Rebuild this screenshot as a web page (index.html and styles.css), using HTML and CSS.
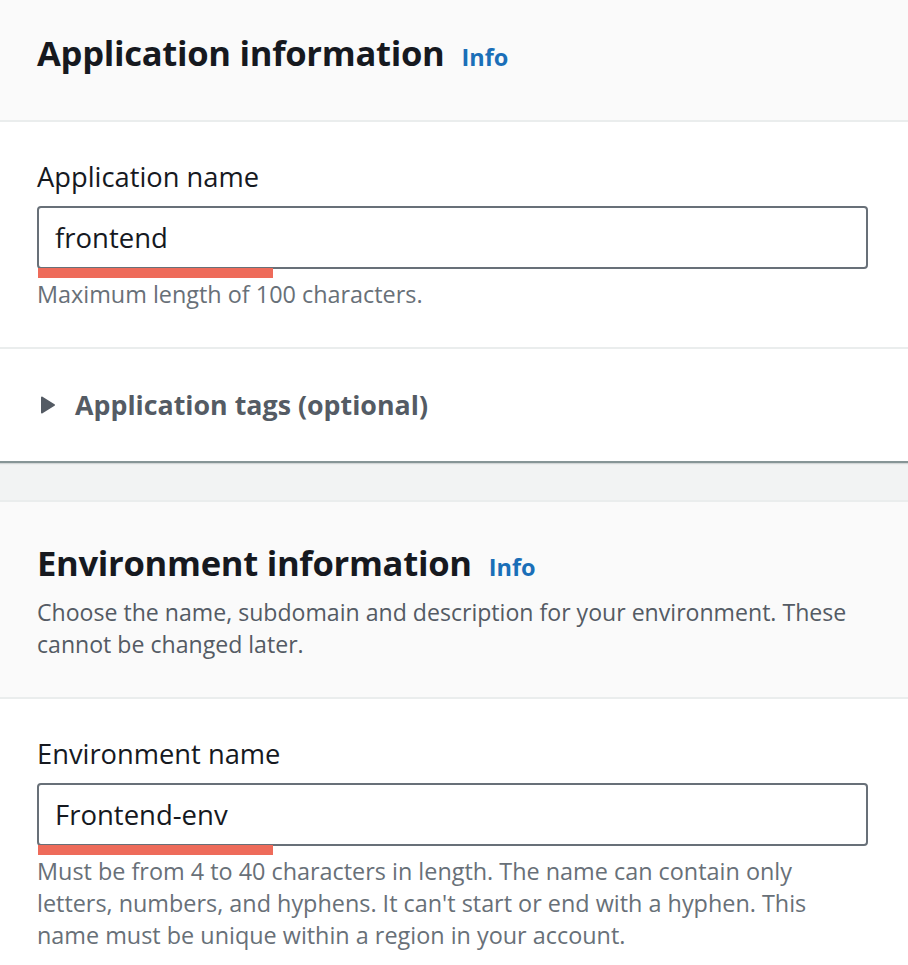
FILE: index.html
```html
<!DOCTYPE html>
<html lang="en">
<head>
<meta charset="utf-8">
<title>Create application</title>
<link rel="stylesheet" href="styles.css">
</head>
<body>
<div class="page">
  <section class="container">
    <header class="container-header header-first">
      <h2 class="title">Application information <a class="info" href="#">Info</a></h2>
    </header>
    <div class="container-body">
      <div class="field">
        <label class="label" for="app-name">Application name</label>
        <div class="input-wrap">
          <input class="input" id="app-name" type="text" value="frontend">
          <span class="mark"></span>
        </div>
        <p class="help">Maximum length of 100 characters.</p>
      </div>
    </div>
    <div class="expander">
      <svg class="caret" width="16" height="20" viewBox="0 0 16 20" aria-hidden="true"><path d="M2 2.5 L14 10 L2 17.5 Z" fill="#545b64" stroke="#545b64" stroke-width="2" stroke-linejoin="round"/></svg>
      <span class="expander-text">Application tags (optional)</span>
    </div>
  </section>

  <section class="container">
    <header class="container-header header-second">
      <h2 class="title">Environment information <a class="info" href="#">Info</a></h2>
      <p class="description">Choose the name, subdomain and description for your environment. These cannot be changed later.</p>
    </header>
    <div class="container-body">
      <div class="field">
        <label class="label" for="env-name">Environment name</label>
        <div class="input-wrap">
          <input class="input" id="env-name" type="text" value="Frontend-env">
          <span class="mark"></span>
        </div>
        <p class="help help-wrap">Must be from 4 to 40 characters in length. The name can contain only letters, numbers, and hyphens. It can't start or end with a hyphen. This name must be unique within a region in your account.</p>
      </div>
    </div>
  </section>
</div>
</body>
</html>
```

FILE: styles.css
```css
* { box-sizing: border-box; }

html, body {
  margin: 0;
  padding: 0;
  background: #f2f3f3;
  font-family: "Open Sans", Roboto, "Liberation Sans", sans-serif;
  color: #16191f;
}

.page {
  display: flex;
  flex-direction: column;
  gap: 39px;
}

.container {
  background: #ffffff;
  border-top: 2px solid #eaeded;
  box-shadow: 0 2px 0 #879596, 0 3px 1px rgba(135,149,150,0.3);
}

.container:first-child {
  border-top: none;
}

.container-header {
  background: #fafafa;
  border-bottom: 2px solid #eaeded;
  padding: 0 40px 40px 37px;
}

.header-first {
  padding-top: 31px;
  padding-bottom: 41px;
}

.header-second {
  padding-top: 39px;
  padding-bottom: 37px;
}

.title {
  margin: 0;
  font-size: 34.6px;
  line-height: 44px;
  font-weight: 700;
  color: #16191f;
  display: flex;
  align-items: baseline;
  gap: 17px;
  letter-spacing: -0.3px;
}

.info {
  font-size: 23.5px;
  font-weight: 700;
  color: #1a6fb8;
  text-decoration: none;
  letter-spacing: 0;
}

.description {
  margin: 7px 0 0;
  font-size: 23.1px;
  line-height: 32px;
  color: #545b64;
}

.container-body {
  padding: 39px 40px 37px 37px;
  border-bottom: 2px solid #eaeded;
}

.container:last-child .container-body {
  border-bottom: none;
}

.field {
  display: flex;
  flex-direction: column;
}

.label {
  font-size: 27.3px;
  line-height: 32px;
  color: #16191f;
  margin-bottom: 13px;
}

.input-wrap {
  position: relative;
}

.input {
  display: block;
  width: 100%;
  height: 63px;
  border: 2px solid #687078;
  border-radius: 4px;
  padding: 0 16px;
  font-family: "Open Sans", Roboto, "Liberation Sans", sans-serif;
  font-size: 27.5px;
  color: #16191f;
  background: #ffffff;
  outline: none;
}

.mark {
  position: absolute;
  left: 1px;
  top: 62px;
  width: 235px;
  height: 10px;
  background: #ee6b5a;
}

.help {
  margin: 9px 0 0;
  font-size: 23.4px;
  line-height: 32px;
  color: #687078;
}

.help-wrap {
  max-width: 800px;
}

.expander {
  display: flex;
  align-items: center;
  gap: 19px;
  padding: 40px 40px 40px 40px;
}

.caret {
  flex: none;
}

.expander-text {
  font-size: 26.8px;
  line-height: 32px;
  font-weight: 700;
  color: #545b64;
}
```
